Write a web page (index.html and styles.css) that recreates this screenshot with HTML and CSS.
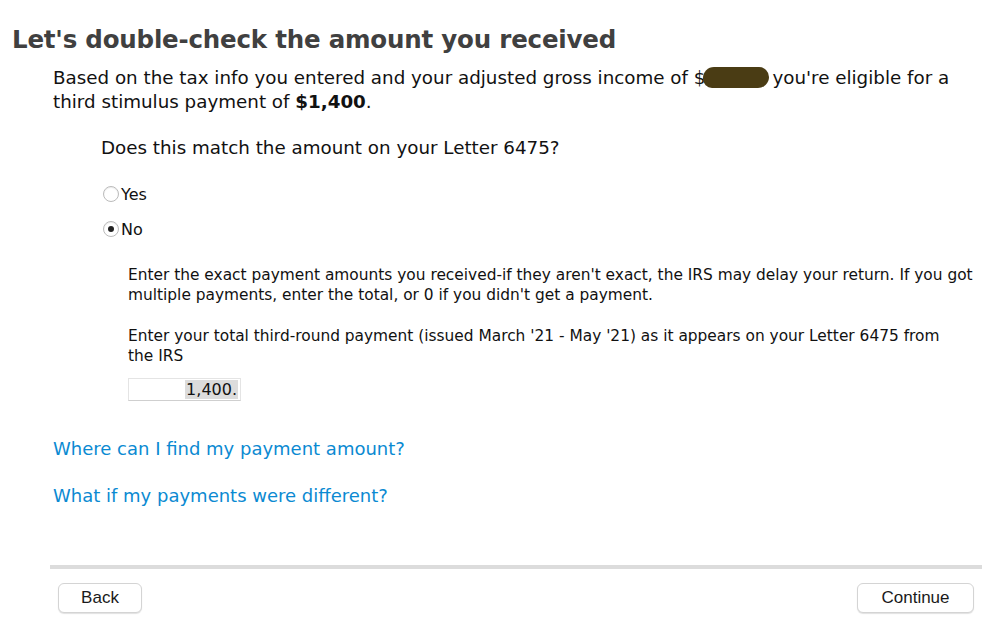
FILE: index.html
```html
<!DOCTYPE html>
<html lang="en">
<head>
    <meta charset="UTF-8">
    <title>Let's double-check the amount you received</title>
    <link rel="stylesheet" href="styles.css">
</head>
<body>
    <div class="page">
        <h1 class="title">Let's double-check the amount you received</h1>
        <p class="intro">Based on the tax info you entered and your adjusted gross income of $<span class="blot"></span>you're eligible for a third stimulus payment of <b>$1,400</b>.</p>

        <div class="question">
            <p class="ask">Does this match the amount on your Letter 6475?</p>
            <label class="choice"><span class="radio"></span>Yes</label>
            <label class="choice"><span class="radio checked"></span>No</label>

            <div class="details">
                <p>Enter the exact payment amounts you received-if they aren't exact, the IRS may delay your return. If you got multiple payments, enter the total, or 0 if you didn't get a payment.</p>
                <p class="narrow">Enter your total third-round payment (issued March '21 - May '21) as it appears on your Letter 6475 from the IRS</p>
                <div class="amount"><span class="sel">1,400.</span></div>
            </div>
        </div>

        <div class="links">
            <a href="#">Where can I find my payment amount?</a>
            <a href="#">What if my payments were different?</a>
        </div>

        <div class="footer">
            <button class="btn">Back</button>
            <button class="btn btn-wide">Continue</button>
        </div>
    </div>
</body>
</html>
```

FILE: styles.css
```css
body { margin: 0; background: #fff; font-family: "DejaVu Sans", Verdana, sans-serif; color: #111; }
.page { padding: 25px 16px 0 0; width: 999px; height: 639px; box-sizing: border-box; }

.title { margin: 0 0 0 12px; font-size: 24.5px; line-height: 30px; color: #404040; font-weight: bold; letter-spacing: -0.2px; }

.intro { margin: 11px 0 0 53px; font-size: 18.3px; line-height: 24px; }
.blot {
    display: inline-block;
    width: 66px;
    height: 21px;
    margin: 0 3px -4px -2px;
    background: #4a3c14;
    border-radius: 11px 10px 11px 9px;
}

.question { margin-left: 101px; }
.ask { margin: 22px 0 0 0; font-size: 18.3px; line-height: 24px; }

.choice { display: flex; align-items: center; font-size: 16px; margin-top: 24px; height: 20px; }
.choice + .choice { margin-top: 15px; }
.radio {
    width: 16px;
    height: 16px;
    margin: 0 2px 0 2px;
    border: 1px solid #bbb;
    border-radius: 50%;
    box-sizing: border-box;
    background: #fff;
    box-shadow: inset 0 1px 1px rgba(0,0,0,0.08);
    display: flex;
    align-items: center;
    justify-content: center;
}
.radio.checked::after { content: ""; width: 6px; height: 6px; border-radius: 50%; background: #222; }

.details { margin: 26px 0 0 27px; font-size: 15.4px; line-height: 20px; }
.details p { margin: 0 0 21px 0; }
.details p.narrow { margin-bottom: 12px; max-width: 836px; }
.amount {
    width: 113px;
    height: 23px;
    border: 1px solid #e4e4e4;
    border-bottom-color: #cfcfcf;
    box-sizing: border-box;
    text-align: right;
    padding: 1px 2px 0 0;
    font-size: 16px;
    line-height: 20px;
}
.sel { background: #dcdcdc; padding: 0 1px; }

.links { margin: 36px 0 0 53px; display: flex; flex-direction: column; gap: 23px; align-items: flex-start; }
.links a { color: #0b8ad2; text-decoration: none; font-size: 18px; line-height: 24px; }

.footer {
    margin: 57px 1px 0 50px;
    border-top: 4px solid #dcdcdc;
    padding: 14px 8px 0 8px;
    display: flex;
    justify-content: space-between;
}
.btn {
    font-family: "Liberation Sans", Arial, sans-serif;
    font-size: 17px;
    color: #1a1a1a;
    background: #fff;
    border: 1px solid #d4d4d4;
    border-radius: 6px;
    box-shadow: 0 1px 1px rgba(0,0,0,0.12);
    width: 84px;
    height: 30px;
    padding: 0;
}
.btn-wide { width: 117px; }
```
